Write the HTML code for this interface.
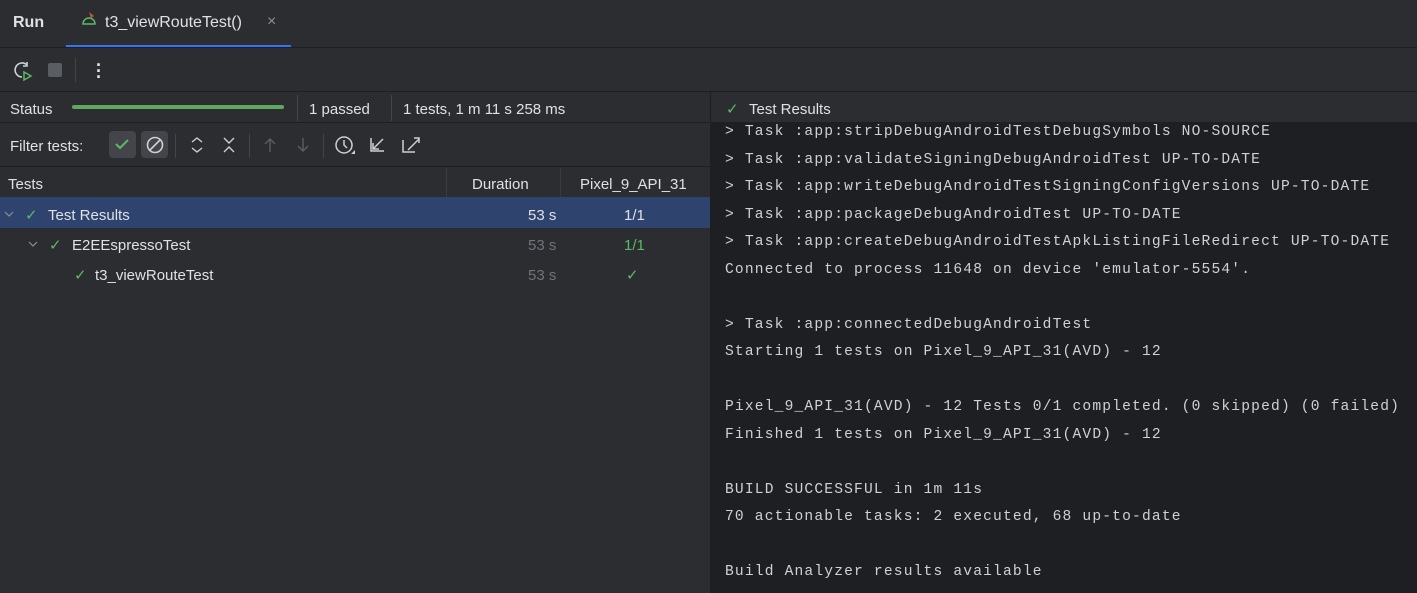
<!DOCTYPE html><html><head><style>
body{margin:0;width:1417px;height:593px;background:#2b2d30;font-family:"Liberation Sans",sans-serif;color:#dfe1e5;overflow:hidden;position:relative;font-size:15px}
.a{position:absolute;white-space:nowrap}
.hl{position:absolute;background:#1e1f22}
.mono{font-family:"Liberation Mono",monospace;font-size:14.6px;letter-spacing:1.17px;color:#cfd1d6}
.g{color:#5fb865}
.dim{color:#6f737a}
</style></head><body>
<div class="a" style="left:13px;top:14px;font-weight:bold;font-size:16px">Run</div>
<svg class="a" style="left:81px;top:11px" width="18" height="16"><path d="M2 13a6 6 0 0 1 12 0z" fill="none" stroke="#5fb865" stroke-width="1.5"/><path d="M8 1l5 4-3 2z" fill="#c75450"/></svg>
<div class="a" style="left:105px;top:14px;font-size:16px">t3_viewRouteTest()</div>
<div class="a" style="left:267px;top:13px;color:#8c8f94;font-size:16px">×</div>
<div class="a" style="left:66px;top:45px;width:225px;height:2px;background:#3574f0"></div>
<div class="a" style="left:0;top:47px;width:1417px;height:1px;background:#1e1f22"></div>
<svg class="a" style="left:12px;top:60px" width="22" height="22"><path d="M15 5A7 7 0 1 0 10 17" fill="none" stroke="#ced0d6" stroke-width="1.6"/><path d="M15 2v4h-4" fill="none" stroke="#ced0d6" stroke-width="1.6"/><path d="M12 12l7 4-7 4z" fill="none" stroke="#5fb865" stroke-width="1.5"/></svg>
<div class="a" style="left:48px;top:63px;width:14px;height:14px;background:#5a5d63;border-radius:2px"></div>
<div class="a" style="left:75px;top:58px;width:1px;height:24px;background:#43454a"></div>
<div class="a" style="left:96px;top:62px;font-size:18px;font-weight:bold;line-height:6px">·<br>·<br>·</div>
<div class="a" style="left:0;top:91px;width:1417px;height:1px;background:#1e1f22"></div>
<div class="a" style="left:10px;top:101px">Status</div>
<div class="a" style="left:72px;top:105px;width:212px;height:4px;border-radius:2px;background:#5fa85f"></div>
<div class="a" style="left:297px;top:95px;width:1px;height:26px;background:#43454a"></div>
<div class="a" style="left:309px;top:101px">1 passed</div>
<div class="a" style="left:391px;top:95px;width:1px;height:26px;background:#43454a"></div>
<div class="a" style="left:403px;top:101px">1 tests, 1 m 11 s 258 ms</div>
<div class="a" style="left:0;top:122px;width:710px;height:1px;background:#1e1f22"></div>
<div class="a" style="left:10px;top:138px">Filter tests:</div>
<div class="a" style="left:109px;top:131px;width:27px;height:27px;background:#43454a;border-radius:4px"></div>
<svg class="a" style="left:113px;top:136px" width="18" height="16"><path d="M3 8l4 4 8-8" fill="none" stroke="#5fb865" stroke-width="2"/></svg>
<div class="a" style="left:141px;top:131px;width:27px;height:27px;background:#43454a;border-radius:4px"></div>
<svg class="a" style="left:145px;top:135px" width="20" height="20"><circle cx="10" cy="10" r="7.5" fill="none" stroke="#ced0d6" stroke-width="1.6"/><path d="M5 15L15 5" stroke="#ced0d6" stroke-width="1.6"/></svg>
<div class="a" style="left:175px;top:134px;width:1px;height:24px;background:#43454a"></div>
<svg class="a" style="left:188px;top:135px" width="80" height="20"><path d="M4 7l5-4 5 4M4 13l5 4 5-4M36 3l5 5 5-5M36 17l5-5 5 5" fill="none" stroke="#ced0d6" stroke-width="1.4"/></svg>
<div class="a" style="left:249px;top:134px;width:1px;height:24px;background:#43454a"></div>
<svg class="a" style="left:260px;top:135px" width="55" height="20"><path d="M10 17V4M5 9l5-5 5 5M43 3v13M38 11l5 5 5-5" fill="none" stroke="#5a5d63" stroke-width="1.4"/></svg>
<div class="a" style="left:323px;top:134px;width:1px;height:24px;background:#43454a"></div>
<svg class="a" style="left:333px;top:134px" width="90" height="22"><circle cx="11" cy="11" r="8" fill="none" stroke="#ced0d6" stroke-width="1.5"/><path d="M11 6v5l3 3" fill="none" stroke="#ced0d6" stroke-width="1.5"/><path d="M18 20h4v-4z" fill="#ced0d6"/><path d="M38 4v13h13M40 15l10-10M40 9v6h6" fill="none" stroke="#ced0d6" stroke-width="1.5"/><path d="M70 6v12h12M75 16l11-11M81 4h5v5" fill="none" stroke="#ced0d6" stroke-width="1.5"/></svg>
<div class="a" style="left:0;top:166px;width:710px;height:1px;background:#1e1f22"></div>
<div class="a" style="left:8px;top:176px">Tests</div>
<div class="a" style="left:446px;top:168px;width:1px;height:29px;background:#393b40"></div>
<div class="a" style="left:472px;top:176px">Duration</div>
<div class="a" style="left:560px;top:168px;width:1px;height:29px;background:#393b40"></div>
<div class="a" style="left:580px;top:176px">Pixel_9_API_31</div>
<div class="a" style="left:0;top:197px;width:710px;height:31px;background:#2e436e"></div>
<svg class="a" style="left:4px;top:210px" width="10" height="8"><path d="M1 2l4 4 4-4" fill="none" stroke="#8c8f94" stroke-width="1.2"/></svg>
<div class="a g" style="left:25px;top:206px">✓</div>
<div class="a" style="left:48px;top:207px">Test Results</div>
<div class="a" style="left:528px;top:207px">53 s</div>
<div class="a" style="left:624px;top:207px">1/1</div>
<svg class="a" style="left:28px;top:240px" width="10" height="8"><path d="M1 2l4 4 4-4" fill="none" stroke="#8c8f94" stroke-width="1.2"/></svg>
<div class="a g" style="left:49px;top:236px">✓</div>
<div class="a" style="left:72px;top:237px">E2EEspressoTest</div>
<div class="a dim" style="left:528px;top:237px">53 s</div>
<div class="a g" style="left:624px;top:237px">1/1</div>
<div class="a g" style="left:74px;top:266px">✓</div>
<div class="a" style="left:95px;top:267px">t3_viewRouteTest</div>
<div class="a dim" style="left:528px;top:267px">53 s</div>
<div class="a g" style="left:626px;top:266px">✓</div>
<div class="a" style="left:710px;top:91px;width:1px;height:502px;background:#1e1f22"></div>
<div class="a g" style="left:726px;top:100px">✓</div>
<div class="a" style="left:749px;top:101px">Test Results</div>
<div class="hl" style="left:711px;top:122px;width:706px;height:471px"></div>
<div class="a mono" style="left:725px;top:119px;line-height:27.5px">&gt; Task :app:stripDebugAndroidTestDebugSymbols NO-SOURCE<br>&gt; Task :app:validateSigningDebugAndroidTest UP-TO-DATE<br>&gt; Task :app:writeDebugAndroidTestSigningConfigVersions UP-TO-DATE<br>&gt; Task :app:packageDebugAndroidTest UP-TO-DATE<br>&gt; Task :app:createDebugAndroidTestApkListingFileRedirect UP-TO-DATE<br>Connected to process 11648 on device 'emulator-5554'.<br><br>&gt; Task :app:connectedDebugAndroidTest<br>Starting 1 tests on Pixel_9_API_31(AVD) - 12<br><br>Pixel_9_API_31(AVD) - 12 Tests 0/1 completed. (0 skipped) (0 failed)<br>Finished 1 tests on Pixel_9_API_31(AVD) - 12<br><br>BUILD SUCCESSFUL in 1m 11s<br>70 actionable tasks: 2 executed, 68 up-to-date<br><br>Build Analyzer results available</div>
</body></html>
